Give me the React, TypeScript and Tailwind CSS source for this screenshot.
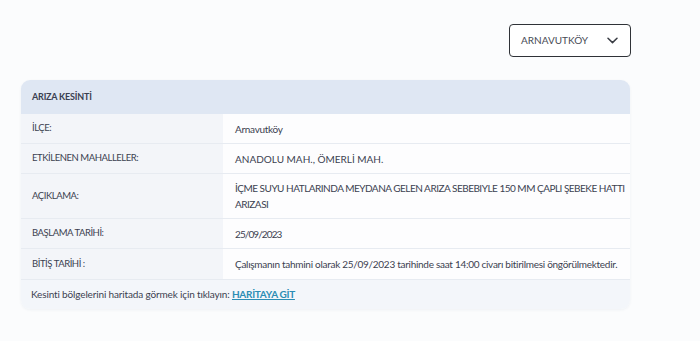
import React from "react";

const rows: { label: string; value: React.ReactNode; h: string; vt: string }[] = [
  { label: "İLÇE:", value: "Arnavutköy", h: "h-[30px]", vt: "tracking-[-0.3px]" },
  { label: "ETKİLENEN MAHALLELER:", value: "ANADOLU MAH., ÖMERLİ MAH.", h: "h-[30px]", vt: "tracking-[0px]" },
  {
    label: "AÇIKLAMA:",
    value: (
      <>
        İÇME SUYU HATLARINDA MEYDANA GELEN ARIZA SEBEBIYLE 150 MM ÇAPLI ŞEBEKE HATTI
        <br />
        ARIZASI
      </>
    ),
    h: "h-[45px]",
    vt: "tracking-[-0.5px]",
  },
  { label: "BAŞLAMA TARİHİ:", value: "25/09/2023", h: "h-[30px]", vt: "tracking-[-0.9px]" },
  {
    label: "BİTİŞ TARİHİ :",
    value:
      "Çalışmanın tahmini olarak 25/09/2023 tarihinde saat 14:00 civarı bitirilmesi öngörülmektedir.",
    h: "h-[31px]",
    vt: "tracking-[-0.28px]",
  },
];

export default function App() {
  return (
    <div
      className="w-[700px] h-[341px] bg-[#fbfcfd] text-[#3b4150] overflow-hidden"
      style={{ fontFamily: "Lato, 'Noto Sans', sans-serif" }}
    >
      <div className="pt-[24px] pl-[509px]">
        <div className="w-[122px] h-[33px] border-[1.5px] border-[#2f3237] rounded-[4px] bg-white flex items-center justify-between pl-[11px] pr-[12px]">
          <span className="text-[10px] text-[#474b55]">ARNAVUTKÖY</span>
          <svg width="11" height="7" viewBox="0 0 11 7" fill="none">
            <path d="M1 1.2 L5.5 5.6 L10 1.2" stroke="#3a3d44" strokeWidth="1.5" strokeLinecap="round" strokeLinejoin="round" />
          </svg>
        </div>
      </div>

      <div className="mt-[23px] ml-[21px] w-[609px] rounded-[9px] overflow-hidden shadow-[0_1px_3px_rgba(40,60,100,0.06)]">
        <div className="h-[34px] bg-[#dfe7f3] flex items-center pl-[11px] text-[9px] tracking-[-0.2px] font-bold text-[#3a4050]">
          ARIZA KESİNTİ
        </div>
        {rows.map((r, i) => (
          <div key={i} className={`flex ${r.h} border-b border-[#e7ebf1]`}>
            <div className="w-[202px] bg-[#f3f5f9] flex items-center pl-[11px] text-[9.5px] tracking-[-0.45px]">
              {r.label}
            </div>
            <div className={`flex-1 bg-[#fdfdfe] flex items-center pl-[12px] text-[10px] leading-[16px] whitespace-nowrap ${r.vt}`}>
              <div>{r.value}</div>
            </div>
          </div>
        ))}
        <div className="h-[29px] bg-[#f3f6fa] flex items-center pl-[10px] text-[10px] tracking-[-0.15px]">
          Kesinti bölgelerini haritada görmek için tıklayın:&nbsp;
          <a className="font-bold text-[#2b8db4] underline tracking-[-0.3px]">HARİTAYA GİT</a>
        </div>
      </div>
    </div>
  );
}
